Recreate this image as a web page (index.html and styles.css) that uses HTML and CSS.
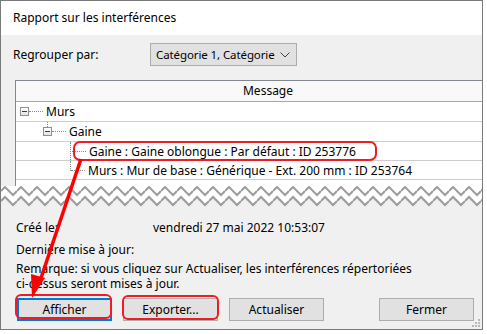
FILE: index.html
```html
<!DOCTYPE html>
<html>
<head>
	<title>Rapport sur les interférences</title>
	<link rel="stylesheet" href="styles.css">
</head>
<body>

	<div class="window">
		<div class="titlebar">Rapport sur les interférences</div>

		<!-- regrouper par -->
		<div class="group-row">
			<span class="group-label">Regrouper par:</span>
			<div class="select">
				<span class="select-text">Catégorie 1, Catégorie</span>
				<svg class="chevron" width="10" height="6" viewBox="0 0 10 6"><path d="M0.5 0.5 L5 5 L9.5 0.5" fill="none" stroke="#444" stroke-width="1"/></svg>
			</div>
		</div>

		<!-- liste des interferences -->
		<div class="grid">
			<div class="grid-head">Message</div>
			<div class="row">
				<span class="expander lvl0"></span>
				<span class="hline short"></span>
				<span class="label">Murs</span>
			</div>
			<div class="row">
				<span class="stem"></span>
				<span class="expander lvl1"></span>
				<span class="hline short"></span>
				<span class="label">Gaine</span>
			</div>
			<div class="row leaf">
				<span class="branch"></span>
				<span class="label">Gaine : Gaine oblongue : Par défaut : ID 253776</span>
			</div>
			<div class="row leaf last">
				<span class="branch"></span>
				<span class="label">Murs : Mur de base : Générique - Ext. 200 mm : ID 253764</span>
			</div>
			<div class="grid-rest"></div>
		</div>

		<svg class="torn" width="481" height="22">
			<defs>
				<pattern id="zig" width="16" height="22" patternUnits="userSpaceOnUse">
					<rect width="16" height="22" fill="#fff"/>
					<path d="M0 15 L4 11 L12 19 L16 15 L16 22 L0 22 Z" fill="#f0f0f0"/>
					<path d="M0 5 L4 1 L12 9 L16 5 M0 15 L4 11 L12 19 L16 15" fill="none" stroke="#9c9c9c" stroke-width="2"/>
				</pattern>
			</defs>
			<rect width="481" height="22" fill="url(#zig)"/>
		</svg>

		<div class="info">
			<div class="info-row"><span class="info-label">Créé le:</span><span>vendredi 27 mai 2022 10:53:07</span></div>
			<div class="info-row"><span class="info-label">Dernière mise à jour:</span></div>
			<p class="remark">Remarque: si vous cliquez sur Actualiser, les interférences répertoriées<br>ci-dessus seront mises à jour.</p>
		</div>

		<div class="buttons">
			<button class="btn default">Afficher</button>
			<button class="btn">Exporter...</button>
			<button class="btn">Actualiser</button>
			<span class="spacer"></span>
			<button class="btn">Fermer</button>
		</div>

		<svg class="grip" width="8" height="8" viewBox="0 0 8 8">
			<rect x="6" y="0" width="2" height="2" fill="#b8b8b8"/>
			<rect x="3" y="3" width="2" height="2" fill="#b8b8b8"/>
			<rect x="6" y="3" width="2" height="2" fill="#b8b8b8"/>
			<rect x="0" y="6" width="2" height="2" fill="#b8b8b8"/>
			<rect x="3" y="6" width="2" height="2" fill="#b8b8b8"/>
			<rect x="6" y="6" width="2" height="2" fill="#b8b8b8"/>
		</svg>
	</div>

	<!-- annotations rouges -->
	<svg class="annot" width="487" height="334">
		<rect x="74" y="142" width="302" height="18" rx="6" fill="none" stroke="#ee1c24" stroke-width="2"/>
		<rect x="16" y="295" width="95" height="23" rx="5" fill="none" stroke="#ee1c24" stroke-width="2"/>
		<rect x="123" y="296" width="95" height="23" rx="5" fill="none" stroke="#ee1c24" stroke-width="2"/>
		<line x1="81" y1="159" x2="40" y2="281" stroke="#ff0000" stroke-width="3.5"/>
		<polygon points="32,298 31,274 45,278" fill="#ff0000"/>
	</svg>

</body>
</html>
```

FILE: styles.css
```css
body {
	margin: 0;
	background-color: #fff;
	font-family: "Noto Sans", sans-serif;
	font-size: 12px;
	color: #000;
}
.window {
	position: relative;
	width: 481px;
	height: 328px;
	border: 1px solid #7a7a7a;
	background-color: #f0f0f0;
	overflow: hidden;
}
.titlebar {
	height: 34px;
	line-height: 34px;
	padding-left: 12px;
	background-color: #fff;
	font-size: 12px;
}
.group-row {
	display: flex;
	align-items: center;
	height: 23px;
	margin-top: 8px;
	padding-left: 12px;
}
.group-label {
	width: 137px;
}
.select {
	display: flex;
	align-items: center;
	justify-content: space-between;
	box-sizing: border-box;
	width: 147px;
	height: 23px;
	padding: 0 6px 0 5px;
	border: 1px solid #adadad;
	background-color: #e1e1e1;
	white-space: nowrap;
}
.select-text {
	font-size: 11.5px;
	letter-spacing: -0.1px;
}
.chevron {
	margin-top: 1px;
}
.grid {
	margin: 14px 0 0 14px;
	border-left: 1px solid #828790;
	border-top: 1px solid #828790;
	background-color: #fff;
}
.grid-head {
	height: 20px;
	line-height: 20px;
	padding-left: 38px;
	text-align: center;
	background-color: #f9f9f9;
	border-bottom: 1px solid #a8a8a8;
}
.row {
	display: flex;
	align-items: center;
	height: 19px;
	border-bottom: 1px solid #cdcdcd;
	position: relative;
	white-space: nowrap;
}
.row.leaf {
	height: 18px;
}
.expander {
	box-sizing: border-box;
	width: 9px;
	height: 9px;
	border: 1px solid #8e8f8f;
	background: linear-gradient(#fff, #e4e4e4);
	position: relative;
}
.expander::after {
	content: "";
	position: absolute;
	left: 1px;
	top: 3px;
	width: 5px;
	height: 1px;
	background-color: #1f3f74;
}
.lvl0 {
	margin-left: 4px;
}
.lvl1 {
	margin-left: 27px;
}
.stem {
	position: absolute;
	left: 31px;
	top: 0;
	height: 5px;
	border-left: 1px dotted #8a8a8a;
}
.hline {
	height: 0;
	border-top: 1px dotted #8a8a8a;
}
.hline.short {
	width: 14px;
	margin-right: 3px;
}
.leaf .branch {
	align-self: stretch;
	margin-left: 54px;
	width: 17px;
	margin-right: 1px;
	position: relative;
	border-left: 1px dotted #8a8a8a;
}
.leaf.last .branch {
	border-left: none;
}
.leaf.last .branch::before {
	content: "";
	position: absolute;
	left: 0;
	top: 0;
	height: 10px;
	border-left: 1px dotted #8a8a8a;
}
.leaf .branch::after {
	content: "";
	position: absolute;
	left: 1px;
	top: 9px;
	width: 14px;
	border-top: 1px dotted #8a8a8a;
}
.grid-rest {
	height: 6px;
}
.torn {
	display: block;
}
.info {
	padding-left: 15px;
	margin-top: 9px;
}
.info-row {
	display: flex;
	height: 22px;
	line-height: 22px;
}
.info-label {
	width: 137px;
}
.remark {
	margin: 0;
	line-height: 15px;
}
.buttons {
	display: flex;
	margin-top: 7px;
	padding: 0 8px 0 16px;
}
.btn {
	box-sizing: border-box;
	width: 95px;
	height: 23px;
	margin-right: 11px;
	padding: 0;
	border: 1px solid #adadad;
	background-color: #e1e1e1;
	font-family: "Noto Sans", sans-serif;
	font-size: 12px;
	color: #000;
}
.btn.default {
	border: 1px solid #0078d7;
	box-shadow: inset 0 0 0 1px #0078d7;
}
.spacer {
	flex: 1;
}
.btn:last-child {
	margin-right: 0;
}
.grip {
	position: absolute;
	right: 2px;
	bottom: 2px;
}
.annot {
	position: absolute;
	left: 0;
	top: 0;
	pointer-events: none;
}
```
